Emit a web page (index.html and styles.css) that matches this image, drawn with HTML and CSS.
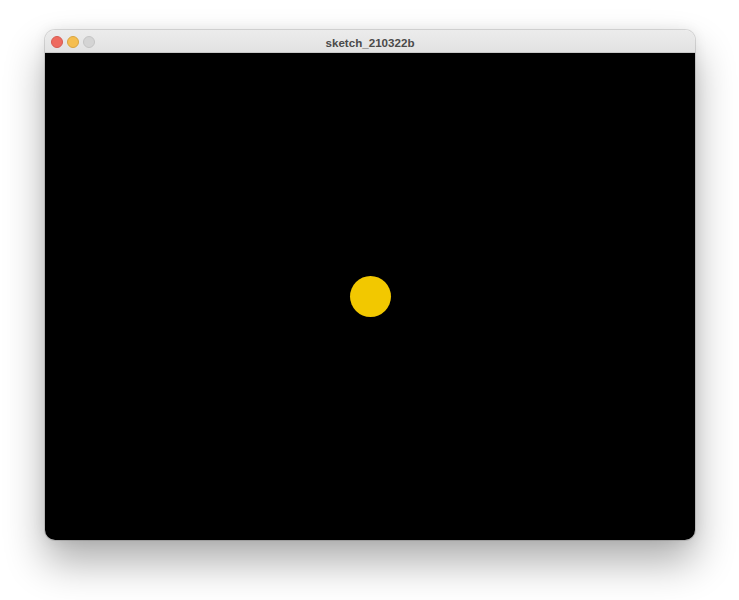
FILE: index.html
```html
<!DOCTYPE html>
<html>
<head>
<meta charset="utf-8">
<link rel="stylesheet" href="styles.css">
</head>
<body>
<div class="window">
  <div class="titlebar">
    <div class="lights">
      <span class="light red"></span>
      <span class="light yellow"></span>
      <span class="light gray"></span>
    </div>
    <div class="title">sketch_210322b</div>
  </div>
  <div class="canvas">
    <div class="ball"></div>
  </div>
</div>
</body>
</html>
```
FILE: styles.css
```css
html, body {
  margin: 0;
  padding: 0;
  background: #ffffff;
}
body {
  width: 739px;
  height: 600px;
  overflow: hidden;
  padding: 30px 0 0 45px;
  box-sizing: border-box;
}
.window {
  width: 650px;
  height: 510px;
  border-radius: 10px;
  overflow: hidden;
  display: flex;
  flex-direction: column;
  box-shadow: 0 0 0 1px rgba(0,0,0,0.12), 0 22px 40px rgba(0,0,0,0.32), 0 0 14px rgba(0,0,0,0.08);
}
.titlebar {
  height: 22px;
  flex: none;
  background: linear-gradient(#ececec, #e2e2e2);
  border-bottom: 1px solid #c8c8c8;
  display: flex;
  align-items: center;
  justify-content: center;
  position: relative;
}
.lights {
  position: absolute;
  left: 6px;
  top: 6px;
  display: flex;
  gap: 4px;
}
.light {
  width: 12px;
  height: 12px;
  border-radius: 50%;
  box-sizing: border-box;
}
.red { background: #ee6a5f; border: 0.5px solid #d65a50; }
.yellow { background: #f5be4f; border: 0.5px solid #d8a440; }
.gray { background: #d4d4d4; border: 0.5px solid #c4c4c4; }
.title {
  font-family: "Liberation Sans", Arial, sans-serif;
  font-weight: bold;
  font-size: 11.6px;
  color: #4a4a4a;
  padding-top: 2px;
}
.canvas {
  flex: 1;
  background: #000000;
  display: flex;
  align-items: center;
  justify-content: center;
}
.ball {
  width: 41px;
  height: 41px;
  border-radius: 50%;
  background: #f2c800;
}
```
